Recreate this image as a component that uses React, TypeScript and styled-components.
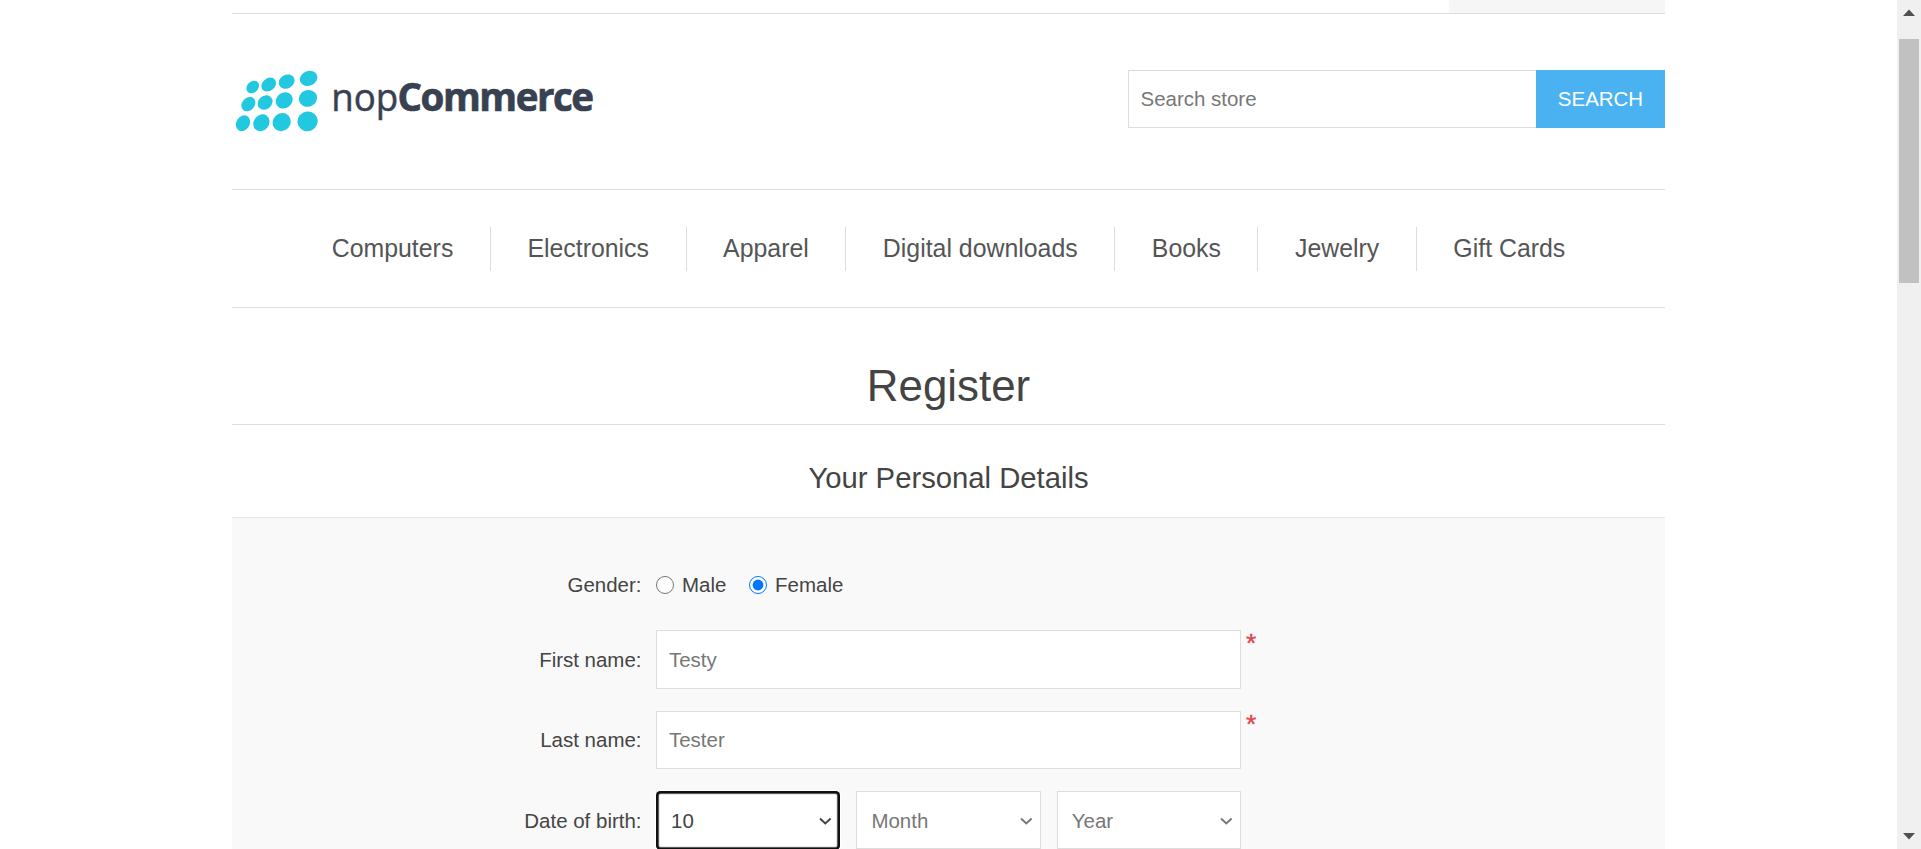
import React from "react";
import styled, { createGlobalStyle } from "styled-components";

const GlobalStyle = createGlobalStyle`
  *, *::before, *::after { box-sizing: border-box; }
  html, body { margin: 0; padding: 0; overflow: hidden; background: #fff; }
  body, input, button, select {
    font-family: "Liberation Sans", Arial, Helvetica, sans-serif;
    font-size: 20.475px;
  }
`;

const Window = styled.div`
  display: flex;
  height: 849px;
  overflow: hidden;
  background: #fff;
`;

const Viewport = styled.div`
  flex: 1;
  height: 849px;
  overflow: hidden;
`;

const Page = styled.div`
  width: 1433px;
  margin: 0 auto;
`;

const HeaderUpper = styled.div`
  display: flex;
  justify-content: flex-end;
  height: 14px;
  border-bottom: 1px solid #ddd;
`;

const CurrentTab = styled.div`
  width: 216px;
  height: 13px;
  background: #f6f6f6;
`;

const HeaderLower = styled.header`
  display: flex;
  justify-content: space-between;
  align-items: flex-start;
  height: 175px;
  padding-top: 56px;
`;

const SearchForm = styled.form`
  display: flex;
  width: 537px;
  height: 58px;
  margin: 0;
`;

const SearchInput = styled.input`
  width: 408px;
  height: 58px;
  padding: 0 11.5px;
  border: 1px solid #ddd;
  border-right: 0;
  border-radius: 0;
  outline: none;
  background: #fff;
  color: #777;
  &::placeholder { color: #777; opacity: 1; }
`;

const SearchButton = styled.button`
  width: 129px;
  height: 58px;
  padding: 0;
  border: 0;
  background: #4ab2f1;
  color: #fff;
`;

const Menu = styled.ul`
  display: flex;
  justify-content: center;
  align-items: flex-start;
  height: 119px;
  margin: 0;
  padding: 37px 0 0;
  border-top: 1px solid #ddd;
  border-bottom: 1px solid #ddd;
  list-style: none;
`;

const MenuItem = styled.li`
  height: 44px;
  padding: 0 36.56px;
  line-height: 42px;
  font-size: 24.8625px;
  color: #555;
  white-space: nowrap;
  & + & { border-left: 1px solid #ddd; }
`;

const PageTitle = styled.h1`
  height: 117px;
  margin: 0;
  padding-top: 53px;
  border-bottom: 1px solid #ddd;
  font-size: 43.875px;
  font-weight: 400;
  line-height: 50px;
  text-align: center;
  color: #444;
`;

const SectionTitle = styled.h2`
  height: 92px;
  margin: 0;
  padding-top: 36px;
  font-size: 29.25px;
  font-weight: 400;
  line-height: 34px;
  text-align: center;
  color: #444;
`;

const Fieldset = styled.div`
  display: flex;
  flex-direction: column;
  gap: 22px;
  height: 400px;
  padding-top: 38px;
  border-top: 1px solid #e5e5e5;
  background: #f9f9f9;
`;

const Row = styled.div<{ $height?: number; $lineHeight?: number }>`
  display: flex;
  height: ${(p) => p.$height ?? 58}px;
  line-height: ${(p) => p.$lineHeight ?? 58}px;
`;

const Label = styled.label`
  width: 409.5px;
  text-align: right;
  color: #444;
  white-space: nowrap;
`;

const Controls = styled.div`
  display: flex;
  width: 585px;
  margin-left: 14.5px;
`;

const RadioOption = styled.label`
  display: flex;
  align-items: center;
  height: 58px;
  margin-right: 22.7px;
  color: #444;
`;

const Radio = styled.input`
  width: 18px;
  height: 18px;
  margin: 0 8px 0 0;
`;

const TextInput = styled.input`
  display: block;
  width: 585px;
  height: 100%;
  padding: 0 12px;
  border: 1px solid #ddd;
  border-radius: 0;
  background: #fff;
  color: #777;
  outline: none;
`;

const Required = styled.span`
  margin-left: 5px;
  font-size: 26.3px;
  line-height: 27px;
  color: #e4434b;
  -webkit-text-stroke: 0.4px #e4434b;
`;

const SelectGroup = styled(Controls)`
  justify-content: space-between;
`;

const SelectBox = styled.div`
  position: relative;
  width: 184.2px;
  height: 58px;
`;

const Select = styled.select<{ $focused?: boolean }>`
  display: block;
  appearance: none;
  width: 100%;
  height: 100%;
  padding: 0 14px;
  border: 1px solid #ddd;
  border-radius: 0;
  outline: none;
  background: #fff;
  color: ${(p) => (p.$focused ? "#444" : "#777")};
`;

const FocusRing = styled.span`
  position: absolute;
  inset: -0.5px 0 -1px;
  border-radius: 4.5px;
  box-shadow: 0 0 0 1px #fff, inset 0 0 0 2.5px #101010, inset 0 0 0 3.3px #aaa;
  pointer-events: none;
`;

const Chevron = styled.svg`
  position: absolute;
  right: 8px;
  top: 26px;
  width: 13px;
  height: 9px;
  fill: none;
  stroke-width: 2;
  pointer-events: none;
`;

const Scrollbar = styled.div`
  display: flex;
  flex-direction: column;
  align-items: center;
  width: 24px;
  height: 849px;
  background: #f0f0f0;
`;

const ScrollArrow = styled.svg`
  width: 24px;
  height: 39px;
  fill: #505050;
`;

const ScrollTrack = styled.div`
  flex: 1;
  width: 20px;
`;

const ScrollThumb = styled.div`
  height: 244px;
  background: #c1c1c1;
`;

const LogoSvg = styled.svg`
  display: block;
  width: 375px;
  height: 93px;
  margin-top: -10px;
`;

/* cx, cy, rx, ry, rotation of each dot */
const dots: number[][] = [
  [20.7, 17, 7, 5.5, -45],
  [36.7, 14.6, 8, 6.3, -38],
  [54.7, 11.6, 8.3, 6.8, -30],
  [76.6, 8.4, 9, 7.3, -20],
  [16.4, 34.1, 7.8, 6.3, -48],
  [33.1, 32.5, 8, 6.7, -42],
  [52.2, 30.4, 8.9, 7.7, -35],
  [76, 28.4, 9.3, 8.3, -20],
  [11, 53.2, 8.3, 6.7, -58],
  [29.4, 52.8, 8.9, 7.6, -52],
  [49.7, 52.1, 9.5, 8.8, -45],
  [75.6, 51.3, 10.2, 9.8, -25],
];

const Logo = () => (
  <LogoSvg viewBox="0 -10 375 93" role="img" aria-label="nopCommerce">
    <g fill="#22c8e0">
      {dots.map(([x, y, rx, ry, a]) => (
        <ellipse key={`${x}-${y}`} cx={x} cy={y} rx={rx} ry={ry} transform={`rotate(${a} ${x} ${y})`} />
      ))}
    </g>
    <g fill="#374151" stroke="#374151" fontFamily='"Open Sans", "Noto Sans", sans-serif' fontSize="38.5">
      <text x="99.2" y="41" textLength="67" lengthAdjust="spacingAndGlyphs" strokeWidth="0.5">nop</text>
      <text x="165.5" y="41" textLength="196.5" lengthAdjust="spacing" fontWeight="700" strokeWidth="0.7">Commerce</text>
    </g>
  </LogoSvg>
);

const menuItems = ["Computers", "Electronics", "Apparel", "Digital downloads", "Books", "Jewelry", "Gift Cards"];

interface DateSelectProps {
  value: string;
  focused?: boolean;
}

const DateSelect = ({ value, focused }: DateSelectProps) => (
  <SelectBox>
    <Select $focused={focused} defaultValue={value} aria-label={value}>
      <option>{value}</option>
    </Select>
    {focused && <FocusRing />}
    <Chevron viewBox="0 0 13 9" stroke={focused ? "#444" : "#777"}>
      <path d="M1 1.6 L6.3 6.4 L11.6 1.6" />
    </Chevron>
  </SelectBox>
);

export default function App() {
  return (
    <Window>
      <GlobalStyle />
      <Viewport>
        <Page>
          <HeaderUpper>
            <CurrentTab />
          </HeaderUpper>
          <HeaderLower>
            <Logo />
            <SearchForm>
              <SearchInput placeholder="Search store" />
              <SearchButton type="button">SEARCH</SearchButton>
            </SearchForm>
          </HeaderLower>
          <Menu>
            {menuItems.map((item) => (
              <MenuItem key={item}>{item}</MenuItem>
            ))}
          </Menu>
          <PageTitle>Register</PageTitle>
          <SectionTitle>Your Personal Details</SectionTitle>
          <Fieldset>
            <Row $height={52}>
              <Label as="span">Gender:</Label>
              <Controls>
                <RadioOption>
                  <Radio type="radio" name="gender" />
                  Male
                </RadioOption>
                <RadioOption>
                  <Radio type="radio" name="gender" defaultChecked />
                  Female
                </RadioOption>
              </Controls>
            </Row>
            <Row $height={59} $lineHeight={60}>
              <Label>First name:</Label>
              <Controls>
                <TextInput defaultValue="Testy" />
              </Controls>
              <Required>*</Required>
            </Row>
            <Row>
              <Label>Last name:</Label>
              <Controls>
                <TextInput defaultValue="Tester" />
              </Controls>
              <Required>*</Required>
            </Row>
            <Row $lineHeight={60}>
              <Label>Date of birth:</Label>
              <SelectGroup>
                <DateSelect value="10" focused />
                <DateSelect value="Month" />
                <DateSelect value="Year" />
              </SelectGroup>
            </Row>
          </Fieldset>
        </Page>
      </Viewport>
      <Scrollbar>
        <ScrollArrow viewBox="0 0 24 39">
          <path d="M6 16 L12 9.6 L18 16 Z" />
        </ScrollArrow>
        <ScrollTrack>
          <ScrollThumb />
        </ScrollTrack>
        <ScrollArrow viewBox="0 0 24 39">
          <path d="M6 23 L12 29.4 L18 23 Z" />
        </ScrollArrow>
      </Scrollbar>
    </Window>
  );
}
